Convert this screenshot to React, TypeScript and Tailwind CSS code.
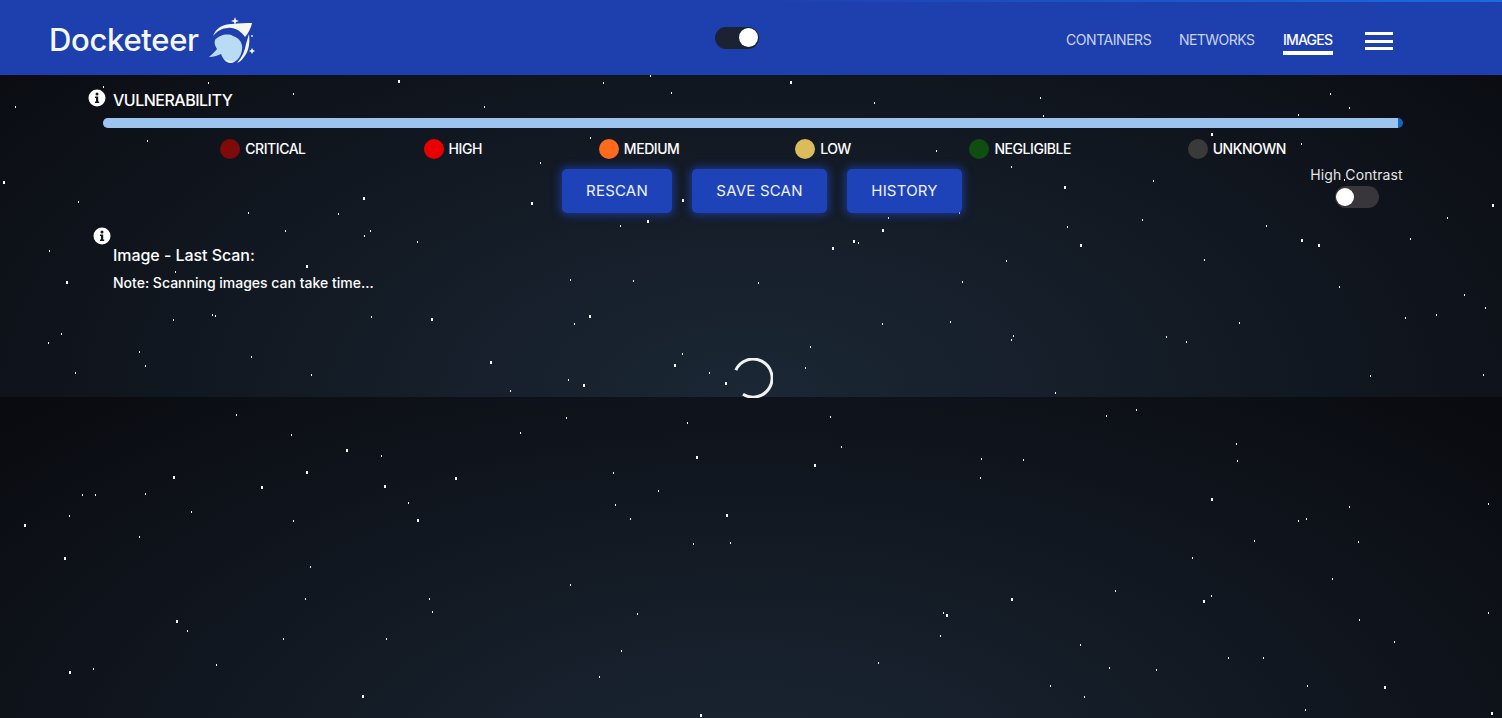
import React from "react";

type Group = [number, number, number[][], number[][]];
const groups: Group[] = [
  [0, 390,
    [[710,75],[874,136],[1144,199],[247,316],[286,316],[436,312],[208,379],[574,367],[880,394],[1225,340],[418,441],[931,532],[916,628],[1288,628],[1297,666],[562,724],[850,748],[1159,747],[280,838],[649,826]],
    [[1041,182],[921,248],[522,263],[786,293],[1155,290],[1368,266],[75,407],[1254,392],[195,506],[531,695],[210,848],[1089,920]]],
  [500, 390,
    [[199,85],[562,100],[991,82],[61,130],[1024,172],[1444,208],[340,250],[1441,265],[475,304],[346,346],[391,388],[580,463],[691,460],[211,586],[412,673],[1330,670],[1321,739],[364,784],[1135,820],[298,862]],
    [[591,203],[945,227],[681,377],[1343,677],[603,976]]],
  [1000, 390,
    [[409,61],[319,79],[70,211],[709,163],[712,214],[1048,352],[1465,343],[919,388],[895,394],[763,454],[1075,457],[577,505],[997,568],[346,604],[634,619],[1465,670],[1078,691],[1183,757],[241,766],[685,805],[790,805],[328,835],[469,841],[151,889],[922,889],[253,922],[916,961]],
    [[636,329],[36,629],[612,635],[1155,893],[1476,970]]],
  [0, 75,
    [[310,37],[625,25],[880,58],[46,97],[1453,97],[442,199],[235,381],[745,415],[1015,418],[856,468],[1111,468],[1093,484],[1252,502],[148,529],[526,592],[637,721],[646,724],[520,736],[1114,727],[184,778],[145,805],[418,832],[754,847],[436,874],[226,895],[934,901]],
    [[1197,19],[12,323],[1092,370],[921,575],[201,622],[1296,733],[1473,862]]],
  [500, 75,
    [[451,4],[310,25],[514,55],[1123,85],[271,190],[121,265],[1309,229],[361,454],[1165,430],[1075,505],[211,616],[400,619],[775,625],[1387,622],[223,748],[1147,748],[1351,742],[931,817],[547,838],[916,880],[628,895],[205,916],[31,949],[1378,414]],
    [[873,22],[96,385],[549,376],[444,439],[1149,466],[1062,498],[999,520],[270,724],[525,871],[678,925],[252,931]]],
  [1000, 75,
    [[121,70],[130,124],[991,58],[1048,100],[895,121],[904,208],[571,232],[34,277],[460,319],[427,436],[202,457],[799,454],[1342,430],[1231,493],[19,559],[613,556],[1018,637],[1393,661],[1456,700],[1216,730],[1309,721],[718,745],[40,784],[34,796],[499,787],[559,802],[1111,904],[1450,901],[166,955],[1033,316]],
    [[636,179],[195,338],[243,511],[906,496],[957,511],[1479,392]]],
];

function Stars() {
  return (
    <svg className="absolute inset-0 pointer-events-none" width={1502} height={718} viewBox="0 0 1502 718" aria-hidden="true">
      {groups.flatMap(([ox, oy, small, big], g) => [
        ...small.map(([x, y], i) => (
          <rect key={`s${g}-${i}`} x={Math.floor(ox + x / 3)} y={Math.floor(oy + y / 3) - 1} width={1} height={2} fill="#ffffff" />
        )),
        ...big.map(([x, y], i) => (
          <rect key={`b${g}-${i}`} x={Math.floor(ox + x / 3) - 1} y={Math.floor(oy + y / 3) - 1} width={2} height={3} fill="#ffffff" />
        )),
      ])}
    </svg>
  );
}

function Logo() {
  return (
    <svg width={48} height={50} viewBox="0 0 48 50" className="shrink-0" aria-hidden="true">
      <path d="M7 24C11 19 20 17 25 20C32 22 35 28 34 34C33 41 28 47 22 47C18 47 15 43 13 38C10 39 6 41 1 41C4 38 7 36 9 33C7 30 6 27 7 24Z" fill="#b9dcf4" />
      <path d="M17 43C19 47 24 48 27 45C24 46 20 45 17 43Z" fill="#eef7fc" />
      <path d="M5 20C8 12 15 8 24 8C31 7 38 7 44 7C43 12 40 18 37 21C33 15 26 11 20 12C14 12 9 15 5 20Z" fill="#f4f8f0" />
      <path d="M41 18C42 27 41 35 36 41C34 44 32 46 29 47C34 41 37 35 38 28C39 25 40 21 41 18Z" fill="#f4f8f0" />
      <path d="M27 1L28 4L31 5L28 6L27 9L26 6L23 5L26 4Z" fill="#ffffff" />
      <circle cx="44" cy="20" r="1" fill="#dbe7f5" />
      <path d="M44 32L45 34L47 35L45 36L44 38L43 36L41 35L43 34Z" fill="#ffffff" />
    </svg>
  );
}

function InfoIcon() {
  return (
    <svg width={18} height={18} viewBox="0 0 18 18" className="shrink-0" aria-hidden="true">
      <circle cx="9" cy="9" r="8.5" fill="#ffffff" />
      <circle cx="9" cy="5" r="1.5" fill="#14181f" />
      <path d="M7 7.6H10.2V12.6H11.2V14H7V12.6H8V9H7Z" fill="#14181f" />
    </svg>
  );
}

const legend = [
  { label: "CRITICAL", color: "bg-[#7f0a0a]", width: "w-[61px]" },
  { label: "HIGH", color: "bg-[#e80000]", width: "w-[33px]" },
  { label: "MEDIUM", color: "bg-[#ff6a1c]", width: "w-[54px]" },
  { label: "LOW", color: "bg-[#dcbb5c]", width: "w-[32px]" },
  { label: "NEGLIGIBLE", color: "bg-[#0f4d10]", width: "w-[76px]" },
  { label: "UNKNOWN", color: "bg-[#3a3a3a]", width: "w-[73px]" },
];

function ActionButton({ label, width }: { label: string; width: string }) {
  return (
    <button className={`h-[44px] ${width} rounded-[5px] bg-[#1e43b8] text-[15px] tracking-[0.2px] text-[#eef2fb] shadow-[0_0_9px_2px_rgba(30,64,175,0.75)]`}>
      {label}
    </button>
  );
}

export default function App() {
  return (
    <div
      className="relative h-[718px] w-full overflow-hidden bg-[radial-gradient(ellipse_at_bottom,#1b2735_0%,#090a0f_100%)] bg-[size:100%_397px] text-white"
      style={{ fontFamily: "Inter, 'Noto Sans', sans-serif" }}
    >
      <Stars />

      <header className="relative flex h-[75px] items-center bg-[#1e40af] pl-[49px] pr-[109px] pt-[5px]">
        <div className="absolute right-0 top-0 h-[2px] w-[732px] bg-gradient-to-r from-transparent to-[#1a6ae0]" />
        <div className="flex w-[666px] items-center">
          <span className="mb-[1px] text-[31px] font-medium leading-none tracking-[-0.3px] text-[#f5f8f2]">Docketeer</span>
          <div className="ml-[9px] mt-[2px]"><Logo /></div>
        </div>
        <div className="mb-[5px] flex h-[22px] w-[44px] items-center justify-end rounded-full bg-[#1a2233] pr-[1px]">
          <span className="h-[19px] w-[19px] rounded-full bg-white" />
        </div>
        <nav className="ml-auto flex items-center text-[14px] leading-[20px] text-[#c9d3ec]">
          <a className="w-[85px] whitespace-nowrap tracking-[-0.45px]">CONTAINERS</a>
          <a className="ml-[28px] w-[75px] whitespace-nowrap tracking-[-0.55px]">NETWORKS</a>
          <a className="relative ml-[29px] w-[50px] whitespace-nowrap font-medium tracking-[-0.8px] text-white">
            IMAGES
            <span className="absolute left-0 right-0 top-[21px] h-[4px] bg-white" />
          </a>
          <div className="ml-[32px] mt-[2px] flex w-[28px] flex-col gap-[4.5px]">
            <span className="h-[3px] bg-white" />
            <span className="h-[3px] bg-white" />
            <span className="h-[3px] bg-white" />
          </div>
        </nav>
      </header>

      <main className="relative">
        <section className="pl-[88px] pr-[99px] pt-[14px]">
          <div className="flex h-[18px] items-start">
            <InfoIcon />
            <span className="ml-[7px] mt-[2px] text-[16px] font-medium leading-[18px] tracking-[-0.5px]">VULNERABILITY</span>
          </div>

          <div className="ml-[15px] mt-[11px] flex flex-col">
            <div className="flex h-[10px] overflow-hidden rounded-full bg-[#1565c0]">
              <div className="h-full w-[1295px] bg-[#9cc4ee]" />
            </div>

            <div className="mt-[11px] flex h-[20px] items-center justify-evenly">
              {legend.map((l) => (
                <div key={l.label} className="flex items-center gap-[5px]">
                  <span className={`h-[20px] w-[20px] rounded-full ${l.color}`} />
                  <span className={`${l.width} whitespace-nowrap text-[14px] font-medium leading-none tracking-[-0.45px]`}>{l.label}</span>
                </div>
              ))}
            </div>

            <div className="flex">
              <div className="ml-[459px] mt-[10px] flex gap-[20px]">
                <ActionButton label="RESCAN" width="w-[110px]" />
                <ActionButton label="SAVE SCAN" width="w-[135px]" />
                <ActionButton label="HISTORY" width="w-[115px]" />
              </div>
              <div className="ml-auto mt-[6px] flex w-[93px] flex-col items-center">
                <span className="whitespace-nowrap text-[14px] leading-[20px] tracking-[0.1px] text-[#e6e6e6]">High Contrast</span>
                <div className="mt-[1px] flex h-[22px] w-[44px] items-center rounded-full bg-[#38363a] pl-[1px]">
                  <span className="h-[18px] w-[18px] rounded-full bg-white" />
                </div>
              </div>
            </div>
          </div>
        </section>

        <section className="mt-[14px] pl-[93px]">
          <InfoIcon />
          <h2 className="ml-[20px] mt-[-1px] text-[16px] font-medium leading-[22px] tracking-[-0.05px]">Image - Last Scan:</h2>
          <p className="ml-[20px] mt-[7px] text-[14px] font-medium leading-[20px]">Note: Scanning images can take time...</p>
        </section>

        <div className="ml-[733px] mt-[65px] h-[40px] w-[40px]">
          <svg width={40} height={40} viewBox="0 0 40 40" aria-hidden="true">
            <path d="M2.8 12.2A19 19 0 1 1 10 36.2" fill="none" stroke="#f2f2f2" strokeWidth={3} />
          </svg>
        </div>
      </main>
    </div>
  );
}
